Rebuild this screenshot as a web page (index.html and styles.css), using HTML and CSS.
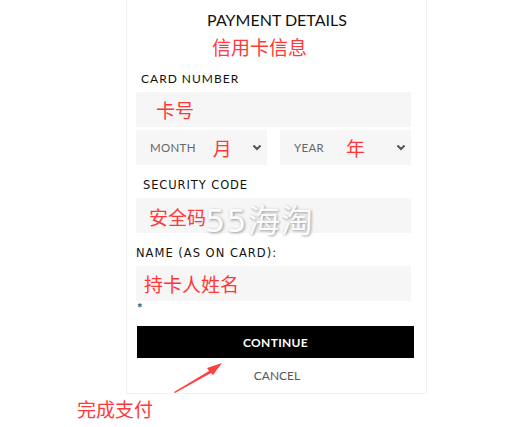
FILE: index.html
```html
<!DOCTYPE html>
<html lang="zh-CN">
<head>
    <meta charset="UTF-8">
    <meta name="viewport" content="width=device-width, initial-scale=1.0">
    <title>Payment Details</title>
    <link rel="stylesheet" href="styles.css">
</head>
<body>
    <div class="page">
        <div class="card">
            <h2 class="title">PAYMENT DETAILS</h2>
            <div class="note note-head">信用卡信息</div>

            <div class="field-label">CARD NUMBER</div>
            <div class="input"><span class="note">卡号</span></div>

            <div class="row">
                <div class="select">
                    <span class="placeholder">MONTH</span>
                    <span class="note note-month">月</span>
                    <svg class="chevron" width="10" height="7" viewBox="0 0 10 7"><polyline points="1.5,1.5 5,5 8.5,1.5" fill="none" stroke="#555" stroke-width="2"/></svg>
                </div>
                <div class="select">
                    <span class="placeholder">YEAR</span>
                    <span class="note note-year">年</span>
                    <svg class="chevron" width="10" height="7" viewBox="0 0 10 7"><polyline points="1.5,1.5 5,5 8.5,1.5" fill="none" stroke="#555" stroke-width="2"/></svg>
                </div>
            </div>

            <div class="field-label label-alt">SECURITY CODE</div>
            <div class="input input-security">
                <span class="note note-sec">安全码</span>
                <span class="watermark">55海淘</span>
            </div>

            <div class="field-label label-alt label-name">NAME (AS ON CARD):</div>
            <div class="input"><span class="note note-name">持卡人姓名</span></div>
            <div class="required">*</div>

            <button class="btn-continue">CONTINUE</button>
            <div class="cancel">CANCEL</div>
        </div>

        <div class="note note-foot">完成支付</div>

        <svg class="arrow" width="70" height="45" viewBox="0 0 70 45">
            <polygon points="4,34 39,13 37,10 52,5 43,17 41,15 5,35" fill="#ff4040"/>
        </svg>
    </div>
</body>
</html>
```

FILE: styles.css
```css
body {
    margin: 0;
    background: #fff;
    font-family: Lato, "Noto Sans", sans-serif;
    color: #111;
}
.page {
    position: relative;
    width: 522px;
    height: 427px;
}
.card {
    margin-left: 126px;
    width: 282px;
    padding: 0 8px 9px 9px;
    border: 1px solid #f0f0f0;
    border-top: none;
}
.title {
    margin: 0;
    padding-top: 10px;
    line-height: 20px;
    font-size: 16px;
    font-weight: normal;
    text-align: center;
    color: #111;
}
.note {
    font-family: "Noto Sans CJK SC", sans-serif;
    color: #ff3838;
    font-size: 19px;
}
.note-head {
    margin-top: 5px;
    line-height: 24px;
    padding-left: 76px;
}
.field-label {
    margin-top: 12px;
    line-height: 16px;
    font-size: 12px;
    letter-spacing: 1px;
    padding-left: 5px;
}
.label-alt {
    font-family: "DejaVu Sans", sans-serif;
    font-size: 11.5px;
    letter-spacing: 0.9px;
    padding-left: 7px;
}
.label-name {
    padding-left: 0;
    letter-spacing: 1px;
}
.input {
    position: relative;
    margin-top: 5px;
    width: 275px;
    height: 35px;
    background: #f6f6f6;
    display: flex;
    align-items: center;
    padding-left: 20px;
    box-sizing: border-box;
}
.input-security {
    padding-left: 13px;
}
.note-sec {
    margin-top: 2px;
}
.note-name {
    margin-left: -12px;
}
.row {
    margin-top: 3px;
    width: 275px;
    display: flex;
    justify-content: space-between;
}
.select {
    width: 131px;
    height: 35px;
    background: #f6f6f6;
    display: flex;
    align-items: center;
    padding-left: 14px;
    padding-right: 5px;
    box-sizing: border-box;
}
.placeholder {
    font-size: 11.5px;
    color: #666;
    letter-spacing: 0.3px;
}
.note-month {
    margin-left: 17px;
}
.note-year {
    margin-left: 22px;
}
.chevron {
    margin-left: auto;
}
.watermark {
    position: absolute;
    left: 69px;
    top: -3px;
    font-family: "DejaVu Sans", "Noto Sans CJK SC", sans-serif;
    font-size: 32px;
    color: #fbfbfb;
    text-shadow: 1px 1px 3px rgba(0, 0, 0, 0.4);
    letter-spacing: 1px;
}
.required {
    line-height: 10px;
    height: 10px;
    font-size: 13px;
    font-weight: bold;
    color: #1e5868;
    padding-left: 1px;
    padding-top: 2px;
    box-sizing: content-box;
    margin-bottom: -2px;
}
.btn-continue {
    display: block;
    margin-top: 15px;
    margin-left: 1px;
    width: 277px;
    height: 32px;
    border: none;
    background: #000;
    color: #fff;
    font-family: Lato, sans-serif;
    font-weight: bold;
    font-size: 12px;
    letter-spacing: 0.3px;
}
.cancel {
    margin-top: 10px;
    line-height: 16px;
    font-size: 12px;
    text-align: center;
    color: #555;
}
.note-foot {
    margin-top: 3px;
    margin-left: 77px;
    line-height: 24px;
}
.arrow {
    position: absolute;
    left: 170px;
    top: 358px;
}
```
